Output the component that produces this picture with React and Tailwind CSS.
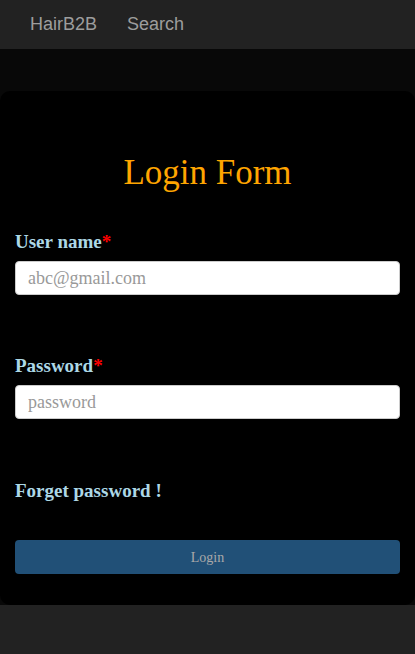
export default function App() {
  return (
    <div className="min-h-[654px] bg-[#222222] flex flex-col">
      <nav className="h-[50px] bg-[#222222] flex items-center px-[15px] font-['Liberation_Sans',Arial,sans-serif] text-[18px] text-[#9d9d9d] border-b border-[#080808]">
        <span className="px-[15px]">HairB2B</span>
        <span className="px-[15px]">Search</span>
      </nav>
      <div className="bg-[#080808] pt-[41px]">
        <div className="bg-black rounded-[10px] px-[15px] pt-[62px] pb-[31px] font-['Liberation_Serif','Times_New_Roman',serif]">
          <h1 className="text-center text-[35px] leading-[40px] text-[#ffa500]">Login Form</h1>
          <div className="mt-[39px]">
            <label className="block text-[19px] font-bold leading-[20px] text-[#add8e6] mb-[9px]">
              User name<span className="text-[#ff0000]">*</span>
            </label>
            <input
              className="block w-full h-[34px] bg-white border border-[#cccccc] rounded-[4px] px-[12px] text-[18px] text-[#555] placeholder:text-[#999999] outline-none"
              placeholder="abc@gmail.com"
            />
          </div>
          <div className="mt-[61px]">
            <label className="block text-[19px] font-bold leading-[20px] text-[#add8e6] mb-[9px]">
              Password<span className="text-[#ff0000]">*</span>
            </label>
            <input
              type="password"
              className="block w-full h-[34px] bg-white border border-[#cccccc] rounded-[4px] px-[12px] text-[18px] text-[#555] placeholder:text-[#999999] outline-none"
              placeholder="password"
            />
          </div>
          <div className="mt-[62px] text-[19px] font-bold leading-[20px] text-[#add8e6]">Forget password !</div>
          <button className="mt-[39px] block w-full h-[34px] rounded-[4px] bg-[#215077] text-[#a9a9a9] text-[14px]">
            Login
          </button>
        </div>
      </div>
      <div className="flex-1 bg-[#222222]"></div>
    </div>
  );
}
